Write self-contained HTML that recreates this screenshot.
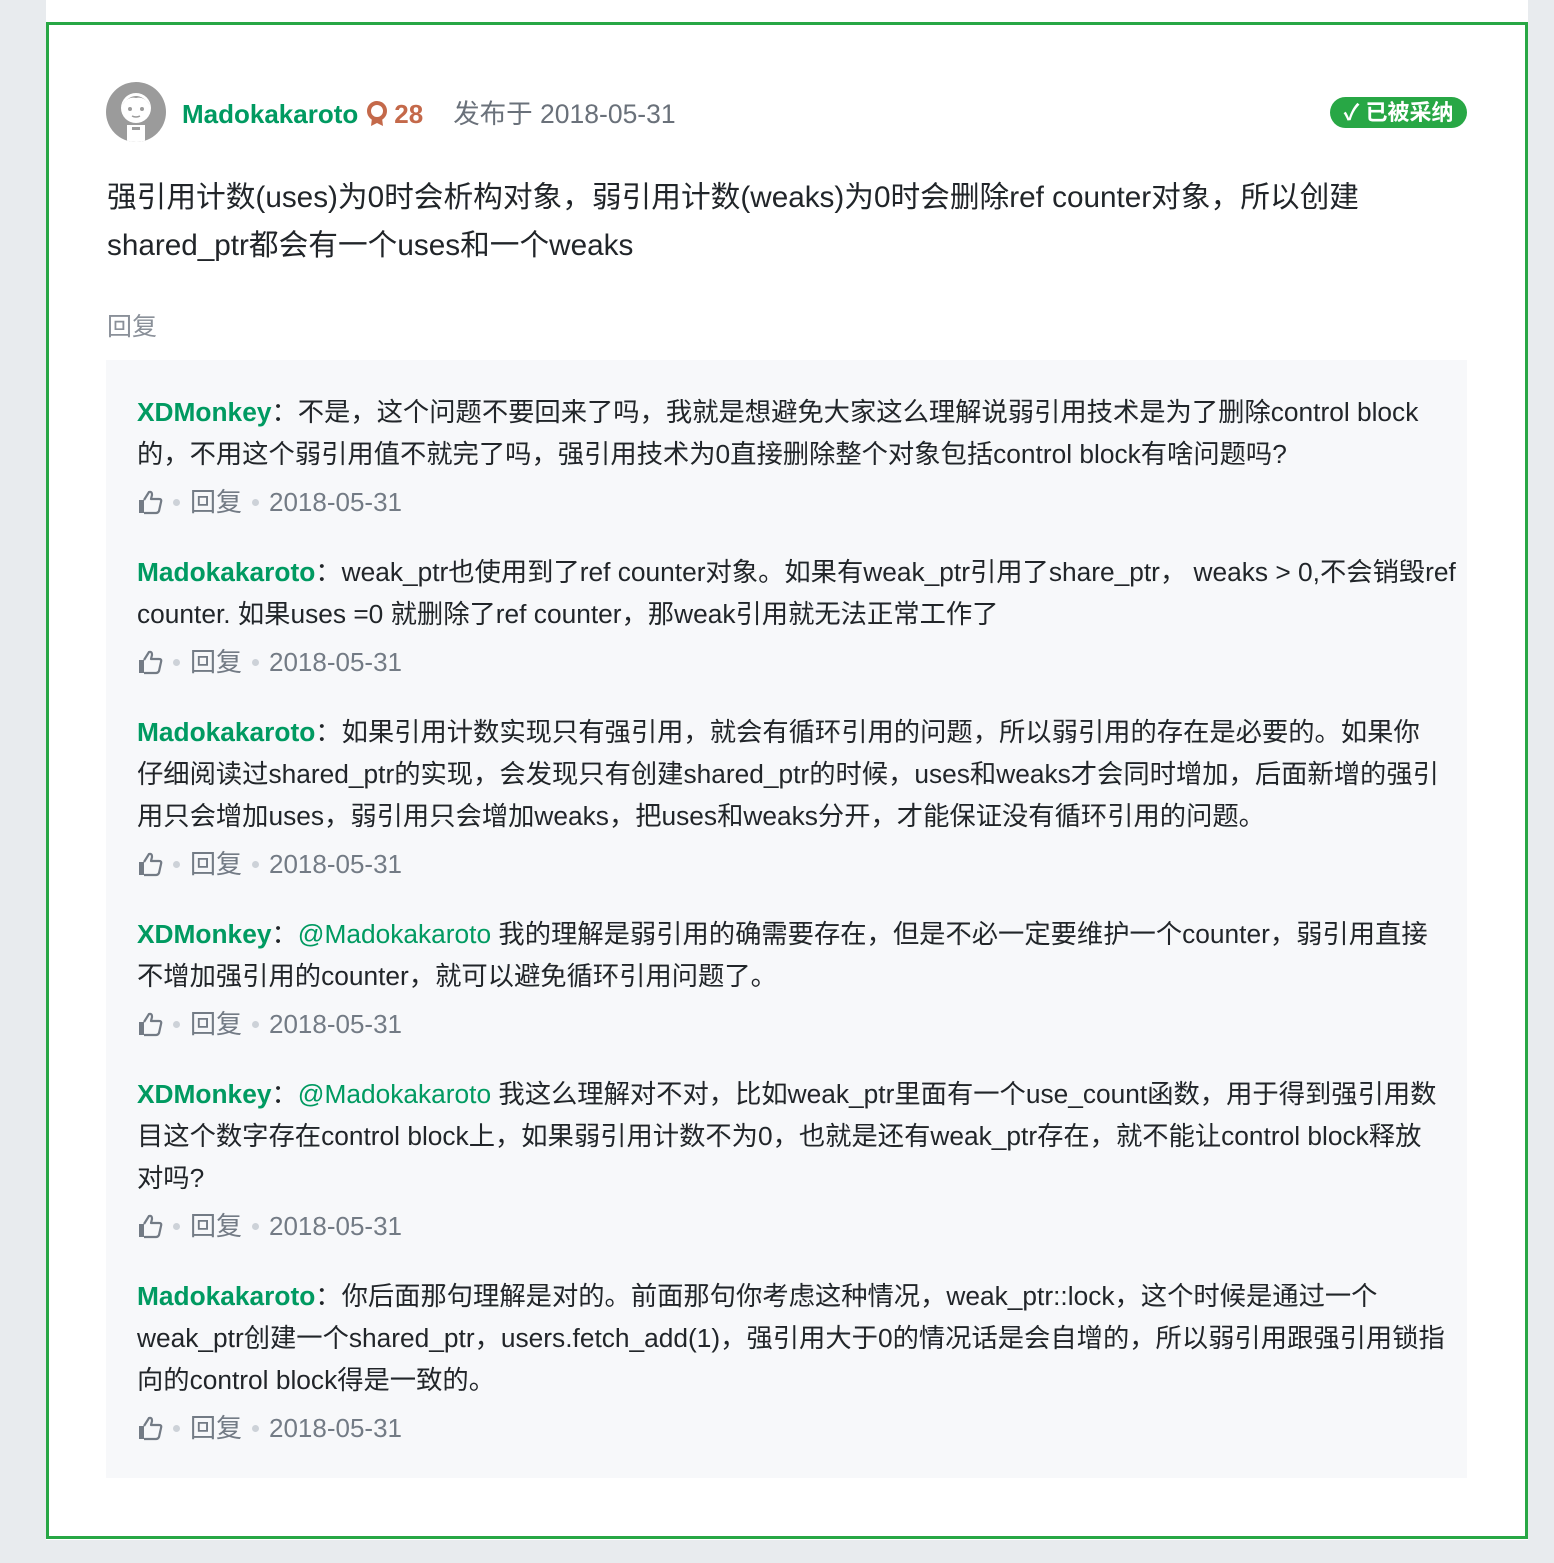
<!DOCTYPE html>
<html><head><meta charset="utf-8"><style>
*{margin:0;padding:0;box-sizing:border-box}
body{width:1554px;height:1563px;background:#e8ebee;font-family:"Liberation Sans","Noto Sans CJK SC",sans-serif;position:relative;overflow:hidden}
.panel{position:absolute;left:46px;top:0;width:1482px;height:1540px;background:#fff}
.box{position:absolute;left:46px;top:22px;width:1482px;height:1517px;border:3px solid #28a745;background:#fff}
.av{position:absolute;left:106px;top:82px;width:60px;height:60px;border-radius:50%;background:#9b9b9b;overflow:hidden}
.hdr{position:absolute;left:182px;top:96px;height:36px;line-height:36px;font-size:26px;white-space:nowrap}
.name{color:#009a61;font-weight:bold}
.lvl{color:#c4694a;font-weight:bold}
.date{color:#6a717a;margin-left:30px;font-size:26.5px}
.badge{position:absolute;left:1330px;top:97px;width:137px;height:31px;border-radius:16px;background:#28a745;color:#fff;font-weight:bold;font-size:22px;line-height:31px;text-align:center}
.content{position:absolute;left:107px;top:174px;font-size:29.7px;line-height:48px;color:#212529;white-space:nowrap}
.reply{position:absolute;left:107px;top:310px;font-size:25px;line-height:34px;color:#8a9099}
.cm{position:absolute;left:106px;top:360px;width:1361px;height:1118px;background:#f7f8fa;padding:31px 0 0 31px}
.c{margin-bottom:28px}
.t{font-size:26.3px;line-height:42px;color:#212529;white-space:nowrap}
.u{color:#009a61;font-weight:bold}
.at{color:#009a61}
.a{margin-top:6px;height:42px;line-height:42px;font-size:26px;color:#737b85;display:flex;align-items:center}
.dot{display:inline-block;width:7px;height:7px;border-radius:50%;background:#cdd2d8;margin:0 10px}
</style></head><body>
<div class="panel"></div>
<div class="box"></div>
<div class="av"><svg width="60" height="60" viewBox="0 0 60 60"><circle cx="30" cy="26" r="15" fill="#fff"/><path d="M15 24 Q30 4 45 24 Q38 14 30 16 Q22 14 15 24Z" fill="#9b9b9b"/><circle cx="24" cy="27" r="2" fill="#9b9b9b"/><circle cx="36" cy="27" r="2" fill="#9b9b9b"/><path d="M26 34 Q30 36 34 34" stroke="#9b9b9b" stroke-width="1.5" fill="none"/><rect x="21" y="43" width="18" height="17" fill="#fff"/><rect x="26" y="45" width="8" height="3" fill="#9b9b9b"/></svg></div>
<div class="hdr"><span class="name">Madokakaroto</span><svg width="26" height="26" viewBox="0 0 22 26" style="vertical-align:-4px;margin:0 4px 0 6px"><circle cx="11" cy="10" r="8" fill="none" stroke="#c4694a" stroke-width="4"/><path d="M6 17 L5 25 L11 22 L17 25 L16 17Z" fill="#c4694a"/></svg><span class="lvl">28</span><span class="date">发布于 2018-05-31</span></div>
<div class="badge">✓ 已被采纳</div>
<div class="content">强引用计数(uses)为0时会析构对象，弱引用计数(weaks)为0时会删除ref counter对象，所以创建<br>shared_ptr都会有一个uses和一个weaks</div>
<div class="reply">回复</div>
<div class="cm">
<div class="c"><div class="t"><span class="u">XDMonkey</span>：不是，这个问题不要回来了吗，我就是想避免大家这么理解说弱引用技术是为了删除control block<br>的，不用这个弱引用值不就完了吗，强引用技术为0直接删除整个对象包括control block有啥问题吗?</div><div class="a">TU<span class="dot"></span>回复<span class="dot"></span>2018-05-31</div></div>
<div class="c"><div class="t"><span class="u">Madokakaroto</span>：weak_ptr也使用到了ref counter对象。如果有weak_ptr引用了share_ptr， weaks &gt; 0,不会销毁ref<br>counter. 如果uses =0 就删除了ref counter，那weak引用就无法正常工作了</div><div class="a">TU<span class="dot"></span>回复<span class="dot"></span>2018-05-31</div></div>
<div class="c"><div class="t"><span class="u">Madokakaroto</span>：如果引用计数实现只有强引用，就会有循环引用的问题，所以弱引用的存在是必要的。如果你<br>仔细阅读过shared_ptr的实现，会发现只有创建shared_ptr的时候，uses和weaks才会同时增加，后面新增的强引<br>用只会增加uses，弱引用只会增加weaks，把uses和weaks分开，才能保证没有循环引用的问题。</div><div class="a">TU<span class="dot"></span>回复<span class="dot"></span>2018-05-31</div></div>
<div class="c"><div class="t"><span class="u">XDMonkey</span>：<span class="at">@Madokakaroto</span> 我的理解是弱引用的确需要存在，但是不必一定要维护一个counter，弱引用直接<br>不增加强引用的counter，就可以避免循环引用问题了。</div><div class="a">TU<span class="dot"></span>回复<span class="dot"></span>2018-05-31</div></div>
<div class="c"><div class="t"><span class="u">XDMonkey</span>：<span class="at">@Madokakaroto</span> 我这么理解对不对，比如weak_ptr里面有一个use_count函数，用于得到强引用数<br>目这个数字存在control block上，如果弱引用计数不为0，也就是还有weak_ptr存在，就不能让control block释放<br>对吗?</div><div class="a">TU<span class="dot"></span>回复<span class="dot"></span>2018-05-31</div></div>
<div class="c"><div class="t"><span class="u">Madokakaroto</span>：你后面那句理解是对的。前面那句你考虑这种情况，weak_ptr::lock，这个时候是通过一个<br>weak_ptr创建一个shared_ptr，users.fetch_add(1)，强引用大于0的情况话是会自增的，所以弱引用跟强引用锁指<br>向的control block得是一致的。</div><div class="a">TU<span class="dot"></span>回复<span class="dot"></span>2018-05-31</div></div>
</div>
<script>
document.querySelectorAll('.a').forEach(function(e){e.innerHTML=e.innerHTML.replace('TU','<svg width="26" height="26" viewBox="0 0 26 26"><path d="M2 11 H7 V24 H2Z" fill="#737b85"/><path d="M7 11 L12 3 Q15 2 15 6 L14 10 H22 Q25 10 24 13 L22 22 Q21 24 19 24 H7" fill="none" stroke="#737b85" stroke-width="2.2" stroke-linejoin="round"/></svg>')});
</script>
</body></html>
